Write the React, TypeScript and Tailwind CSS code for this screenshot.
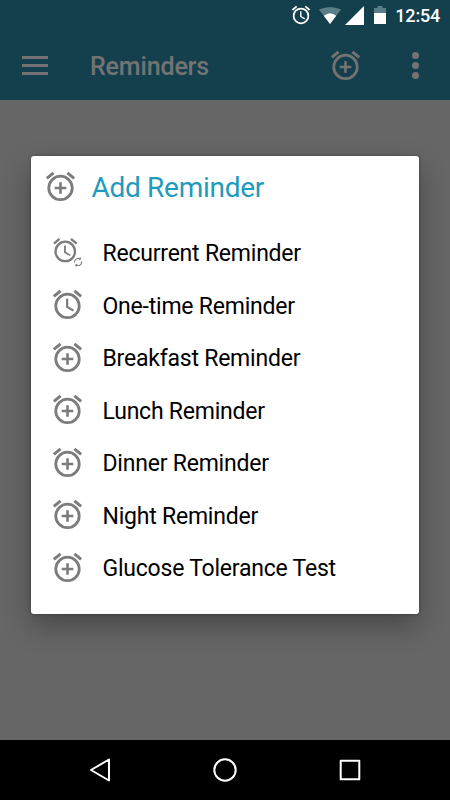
import { clsx } from "clsx";

type IconKind = "add" | "clock" | "recurrent";

const BELLS = "M7.88 3.39L6.6 1.86 2 5.71l1.29 1.53 4.59-3.85zM22 5.72l-4.6-3.86-1.29 1.53 4.6 3.86L22 5.72z";
const RING = "M12 4a9 9 0 1 0 0 18 9 9 0 0 0 0-18zm0 16.1a7.1 7.1 0 1 1 0-14.2 7.1 7.1 0 0 1 0 14.2z";
const PLUS = "M12.9 9h-1.8v3.1H8v1.8h3.1V17h1.8v-3.1H16v-1.8h-3.1V9z";
const HANDS = "M12.5 8H11v6l4.75 2.85.75-1.23-4-2.37V8z";
const RENEW =
  "M12 6v3l4-4-4-4v3c-4.42 0-8 3.58-8 8 0 1.57.46 3.03 1.24 4.26L6.7 14.8A5.87 5.87 0 0 1 6 12c0-3.31 2.69-6 6-6zm6.76 1.74L17.3 9.2c.44.84.7 1.79.7 2.8 0 3.31-2.69 6-6 6v-3l-4 4 4 4v-3c4.42 0 8-3.58 8-8 0-1.57-.46-3.03-1.24-4.26z";

function AlarmIcon({ kind, className }: { kind: IconKind; className?: string }) {
  return (
    <svg viewBox="0 0 24 24" fill="currentColor" className={clsx("shrink-0", className)}>
      {kind === "recurrent" ? (
        <>
          <path d={BELLS + RING + HANDS} transform="translate(.5 .5) scale(.83)" />
          <path d={RENEW} transform="translate(19.3 18.5) rotate(20) scale(.35) translate(-12 -12)" />
        </>
      ) : (
        <path d={BELLS + RING + (kind === "add" ? PLUS : HANDS)} />
      )}
    </svg>
  );
}

const reminders: { label: string; kind: IconKind }[] = [
  { label: "Recurrent Reminder", kind: "recurrent" },
  { label: "One-time Reminder", kind: "clock" },
  { label: "Breakfast Reminder", kind: "add" },
  { label: "Lunch Reminder", kind: "add" },
  { label: "Dinner Reminder", kind: "add" },
  { label: "Night Reminder", kind: "add" },
  { label: "Glucose Tolerance Test", kind: "add" },
];

function StatusBar() {
  return (
    <div className="flex h-[30px] items-center justify-end pr-[10px] text-white">
      <AlarmIcon kind="clock" className="h-[22px] w-[22px]" />
      <svg viewBox="0 0 22 18" className="ml-[7px] h-[18px] w-[22px]">
        <path d="M0 3.6Q11-1.8 22 3.6L11 18z" fill="#5b7d87" />
        <path d="M4.8 9.8Q11 4.6 17.2 9.8L11 18z" fill="#fff" />
      </svg>
      <svg viewBox="0 0 19 19" className="ml-[4px] h-[19px] w-[19px]" fill="#fff">
        <path d="M19 0v19H0z" />
      </svg>
      <svg viewBox="0 0 12 18" className="ml-[10px] h-[18px] w-3">
        <path d="M0 2h3.5V0h5v2H12v5H0z" fill="#5b7d87" />
        <path d="M0 7h12v11H0z" fill="#fff" />
      </svg>
      <span className="ml-[9px] pt-[2px] text-[18px] leading-none font-medium tracking-[-0.2px]">12:54</span>
    </div>
  );
}

function AppBar() {
  return (
    <header className="flex h-[70px] items-center text-[#737373]">
      <div className="ml-[22px] flex w-[26px] flex-col gap-[5px]">
        <span className="h-[3px] bg-current" />
        <span className="h-[3px] bg-current" />
        <span className="h-[3px] bg-current" />
      </div>
      <h1 className="ml-[42px] pt-[3px] text-[25px] leading-none font-medium tracking-[-0.15px]">Reminders</h1>
      <AlarmIcon kind="add" className="ml-auto h-[35px] w-[35px]" />
      <div className="mr-[31.5px] ml-[49px] flex flex-col gap-[3px]">
        <span className="h-[7px] w-[7px] rounded-full bg-current" />
        <span className="h-[7px] w-[7px] rounded-full bg-current" />
        <span className="h-[7px] w-[7px] rounded-full bg-current" />
      </div>
    </header>
  );
}

function NavBar() {
  return (
    <nav className="flex h-[60px] items-center justify-between bg-black px-[88px]">
      <svg viewBox="0 0 24 24" className="h-6 w-6" fill="none" stroke="#fff" strokeWidth="2" strokeLinejoin="round">
        <path d="M21 1.5v21L3 12z" />
      </svg>
      <svg viewBox="0 0 24 24" className="h-6 w-6" fill="none" stroke="#fff" strokeWidth="2">
        <circle cx="12" cy="12" r="10.7" />
      </svg>
      <svg viewBox="0 0 24 24" className="h-6 w-6" fill="none" stroke="#fff" strokeWidth="2" strokeLinejoin="round">
        <path d="M2.7 2.7h18.6v18.6H2.7z" />
      </svg>
    </nav>
  );
}

function AddReminderDialog() {
  return (
    <div className="absolute top-[156px] left-[31px] h-[458px] w-[388px] rounded-[3px] bg-white shadow-[0_12px_28px_rgba(0,0,0,0.3),0_0_3px_rgba(0,0,0,0.35)]">
      <div className="flex h-[60px] items-center pl-[12.4px] text-[#1f9bbd]">
        <AlarmIcon kind="add" className="h-[35px] w-[35px] text-[#7c7c7c]" />
        <h2 className="ml-[13px] pt-[4px] text-[28px] leading-none tracking-[-0.27px]">Add Reminder</h2>
      </div>
      <ul className="mt-[10px]">
        {reminders.map((item) => (
          <li key={item.label} className="flex h-[52.5px] items-center pl-[19px]">
            <AlarmIcon kind={item.kind} className="h-[35px] w-[35px] text-[#7c7c7c]" />
            <span className="ml-[17.5px] pt-[3.2px] text-[23px] leading-none tracking-[-0.22px] text-black">{item.label}</span>
          </li>
        ))}
      </ul>
    </div>
  );
}

export default function App() {
  return (
    <div className="relative flex h-[800px] w-[450px] flex-col overflow-hidden bg-[#666] font-['Roboto',sans-serif]">
      <div className="bg-[#14404d]">
        <StatusBar />
        <AppBar />
      </div>
      <main className="flex-1" />
      <NavBar />
      <AddReminderDialog />
    </div>
  );
}
